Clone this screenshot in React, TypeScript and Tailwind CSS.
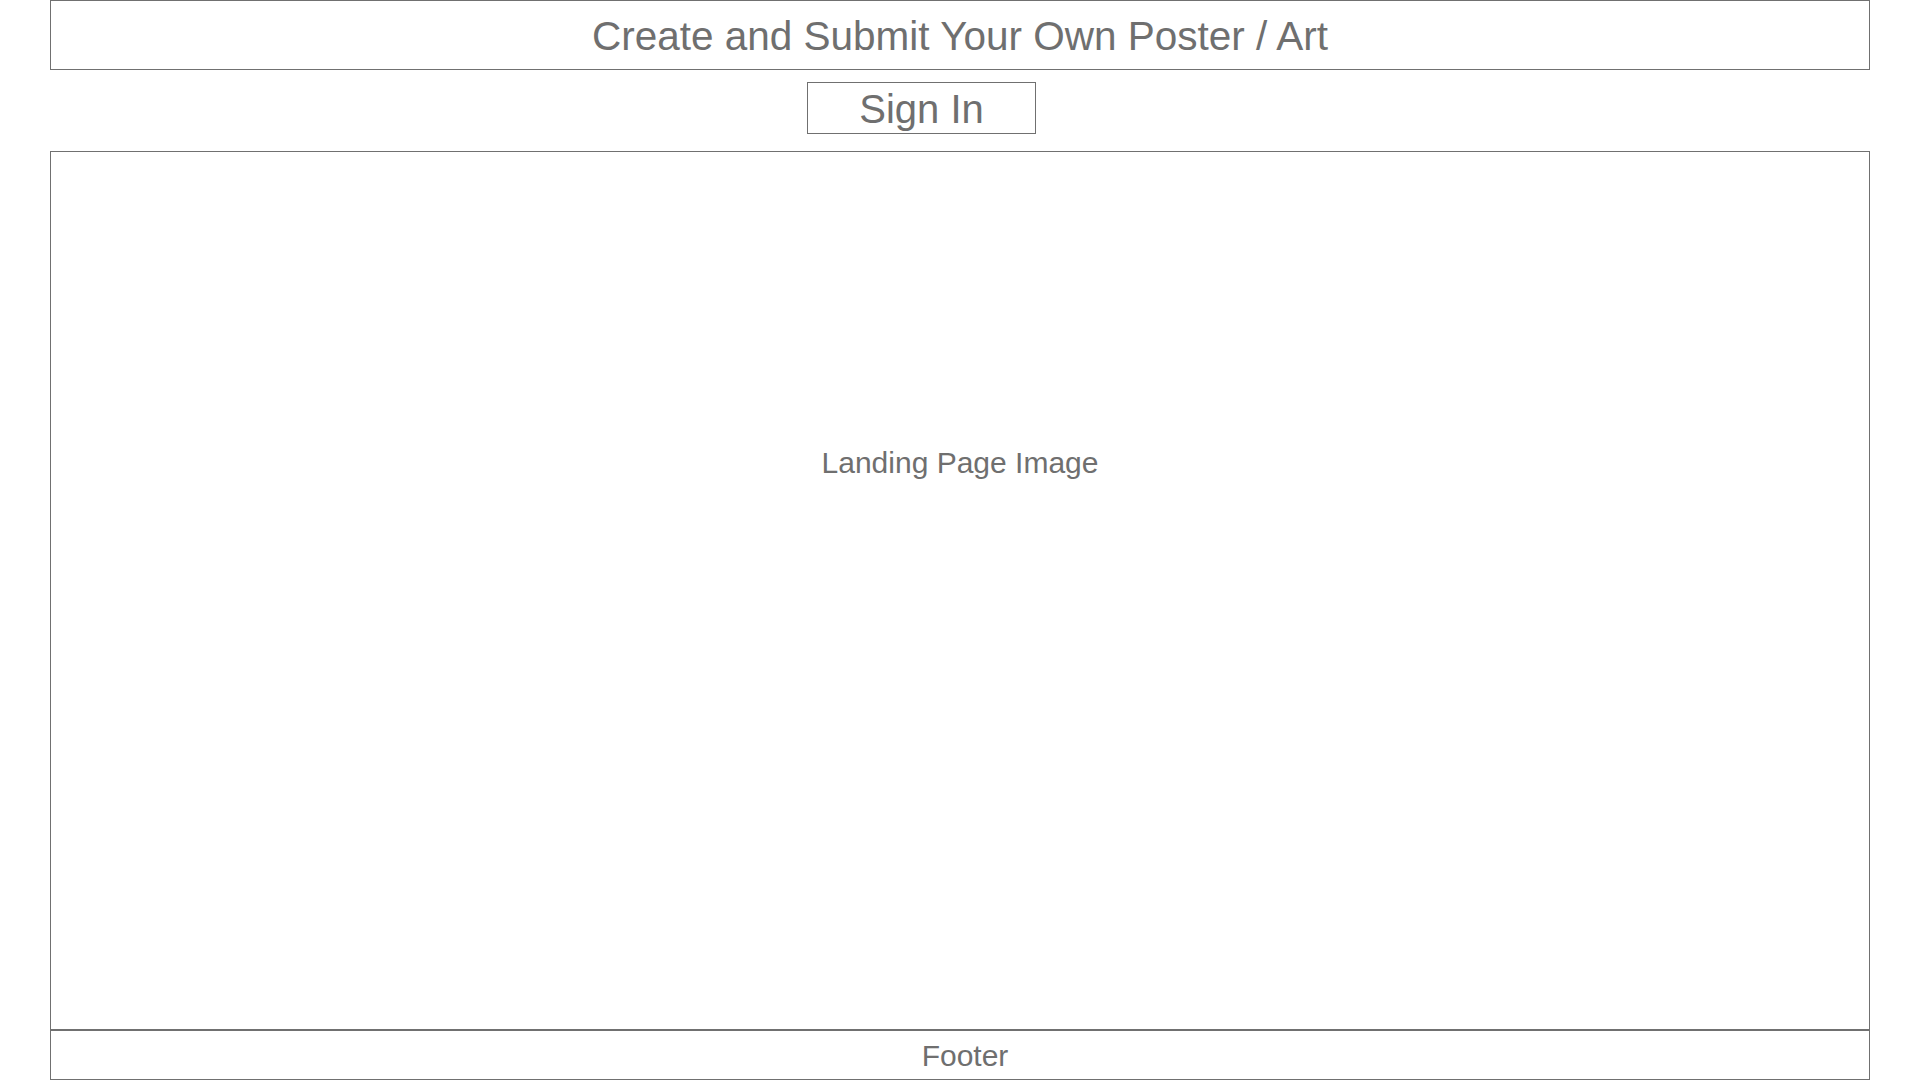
export default function App() {
  return (
    <div
      className="w-full h-[1080px] bg-white px-[50px] text-[#6f6f6f] overflow-hidden"
      style={{ fontFamily: '"Liberation Sans", Arial, sans-serif' }}
    >
      {/* Header */}
      <div className="h-[70px] border border-[#707070] flex items-center justify-center pt-[2px]">
        <h1 className="text-[40.5px] leading-none">Create and Submit Your Own Poster / Art</h1>
      </div>

      {/* Sign in */}
      <div className="mt-[12px] ml-[757px] w-[229px] h-[52px] border border-[#707070] flex items-center justify-center pt-[2px]">
        <span className="text-[40px] leading-none">Sign In</span>
      </div>

      {/* Landing image placeholder */}
      <div className="mt-[17px] h-[879px] border border-[#707070] flex justify-center pt-[294px]">
        <p className="text-[30px] leading-[34px]">Landing Page Image</p>
      </div>

      {/* Footer */}
      <div className="h-[50px] border border-[#707070] flex items-center justify-center pl-[10px] pt-[2px]">
        <p className="text-[30px] leading-none">Footer</p>
      </div>
    </div>
  )
}
